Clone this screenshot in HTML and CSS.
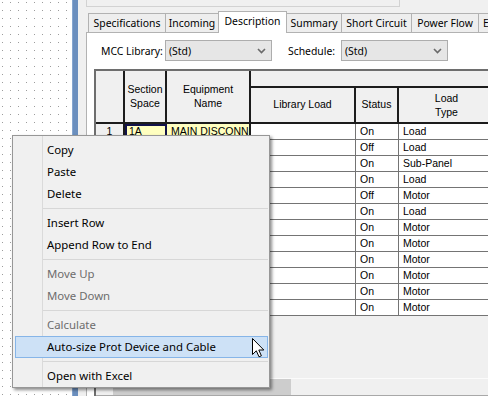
FILE: index.html
```html
<!DOCTYPE html>
<html lang="en">
<head>
  <title>MCC Description</title>
  <meta charset="UTF-8">
  <link rel="stylesheet" href="styles.css">
</head>
<body>
  <div class="screen">
    <div class="canvas"></div>
    <div class="dock-bar"></div>
    <div class="window">
      <div class="top-box"></div>
      <div class="tabs">
        <div class="tab tab-spec">Specifications</div>
        <div class="tab tab-incoming">Incoming</div>
        <div class="tab tab-desc is-active">Description</div>
        <div class="tab tab-summary">Summary</div>
        <div class="tab tab-sc">Short Circuit</div>
        <div class="tab tab-pf">Power Flow</div>
        <div class="tab tab-more">E</div>
      </div>
      <div class="tab-panel">
        <div class="filters">
          <span class="field-label label-lib">MCC Library:</span>
          <div class="combo">
            <span>(Std)</span>
            <svg class="chevron" width="9" height="6" viewBox="0 0 9 6"><path d="M1 1 L4.5 4.5 L8 1" fill="none" stroke="#6a6a6a" stroke-width="1.6"/></svg>
          </div>
          <span class="field-label label-sched">Schedule:</span>
          <div class="combo">
            <span>(Std)</span>
            <svg class="chevron" width="9" height="6" viewBox="0 0 9 6"><path d="M1 1 L4.5 4.5 L8 1" fill="none" stroke="#6a6a6a" stroke-width="1.6"/></svg>
          </div>
        </div>

        <div class="grid">
          <table class="sheet">
            <colgroup>
              <col class="c-num"><col class="c-sec"><col class="c-equip">
              <col class="c-lib"><col class="c-status"><col class="c-type">
            </colgroup>
            <thead>
              <tr class="group-row">
                <th rowspan="2"></th>
                <th rowspan="2">Section<br>Space</th>
                <th rowspan="2">Equipment<br>Name</th>
                <th colspan="3" class="group-cell"></th>
              </tr>
              <tr class="label-row">
                <th>Library Load</th>
                <th>Status</th>
                <th>Load<br>Type</th>
              </tr>
            </thead>
            <tbody>
              <tr><td class="num">1</td><td class="fixed hl is-selected">1A</td><td class="fixed hl">MAIN DISCONN</td><td></td><td>On</td><td>Load</td></tr>
              <tr><td class="num"></td><td class="fixed"></td><td class="fixed"></td><td></td><td>Off</td><td>Load</td></tr>
              <tr><td class="num"></td><td class="fixed"></td><td class="fixed"></td><td></td><td>On</td><td>Sub-Panel</td></tr>
              <tr><td class="num"></td><td class="fixed"></td><td class="fixed"></td><td></td><td>On</td><td>Load</td></tr>
              <tr><td class="num"></td><td class="fixed"></td><td class="fixed"></td><td></td><td>Off</td><td>Motor</td></tr>
              <tr><td class="num"></td><td class="fixed"></td><td class="fixed"></td><td></td><td>On</td><td>Load</td></tr>
              <tr><td class="num"></td><td class="fixed"></td><td class="fixed"></td><td></td><td>On</td><td>Motor</td></tr>
              <tr><td class="num"></td><td class="fixed"></td><td class="fixed"></td><td></td><td>On</td><td>Motor</td></tr>
              <tr><td class="num"></td><td class="fixed"></td><td class="fixed"></td><td></td><td>On</td><td>Motor</td></tr>
              <tr><td class="num"></td><td class="fixed"></td><td class="fixed"></td><td></td><td>On</td><td>Motor</td></tr>
              <tr><td class="num"></td><td class="fixed"></td><td class="fixed"></td><td></td><td>On</td><td>Motor</td></tr>
              <tr><td class="num"></td><td class="fixed"></td><td class="fixed"></td><td></td><td>On</td><td>Motor</td></tr>
            </tbody>
          </table>
          <div class="grid-empty"></div>
          <div class="hscroll"><div class="thumb"></div></div>
        </div>
      </div>
    </div>
  </div>

  <div class="context-menu">
    <div class="menu-item">Copy</div>
    <div class="menu-item">Paste</div>
    <div class="menu-item">Delete</div>
    <div class="menu-sep"></div>
    <div class="menu-item">Insert Row</div>
    <div class="menu-item">Append Row to End</div>
    <div class="menu-sep"></div>
    <div class="menu-item is-disabled">Move Up</div>
    <div class="menu-item is-disabled">Move Down</div>
    <div class="menu-sep"></div>
    <div class="menu-item is-disabled">Calculate</div>
    <div class="menu-item is-hot">Auto-size Prot Device and Cable</div>
    <div class="menu-sep"></div>
    <div class="menu-item">Open with Excel</div>
  </div>

  <svg class="cursor" width="13" height="20" viewBox="0 0 13 20">
    <path d="M0.5 0.5 L0.5 16.5 L4.3 12.8 L7 18.8 L9.4 17.8 L6.8 12 L11.8 12 Z" fill="#fff" stroke="#000" stroke-width="1" stroke-linejoin="miter"/>
  </svg>
</body>
</html>
```

FILE: styles.css
```css
* {
  box-sizing: border-box;
}
html, body {
  margin: 0;
  padding: 0;
}
body {
  width: 488px;
  height: 396px;
  overflow: hidden;
  position: relative;
  background: #f0f0f0;
  font-family: 'Noto Sans', 'Open Sans', sans-serif;
  font-size: 12px;
  color: #000;
}
.screen {
  display: flex;
  height: 396px;
}

/* drawing canvas on the left */
.canvas {
  width: 72px;
  flex: none;
  background-color: #fff;
  background-image:
    linear-gradient(to right, #fff 7px, transparent 7px),
    linear-gradient(to bottom, #fff 7px, #9c9c9c 7px);
  background-size: 8px 8px;
  background-position: 3px 3px;
}
.dock-bar {
  width: 6px;
  flex: none;
  background: #6b8fbe;
  border-left: 1px solid #86a6cf;
}
.window {
  flex: 1;
  display: flex;
  flex-direction: column;
  padding-left: 8px;
  min-width: 0;
}
.top-box {
  width: 314px;
  height: 7px;
  flex: none;
  border: 1px solid #d2d2d2;
  border-top: none;
  background: #f0f0f0;
}

/* tabs */
.tabs {
  display: flex;
  align-items: flex-end;
  height: 21px;
  margin-top: 4px;
  padding-left: 2px;
  flex: none;
  position: relative;
  z-index: 1;
  font-family: 'Noto Sans', sans-serif;
}
.tab {
  height: 19px;
  flex: none;
  border: 1px solid #b2b2b2;
  border-bottom: none;
  margin-right: -1px;
  background: #eeeeee;
  font-size: 10.4px;
  line-height: 18px;
  text-align: center;
  white-space: nowrap;
  overflow: hidden;
}
.tab.is-active {
  height: 22px;
  margin-bottom: -1px;
  background: #fff;
  line-height: 19px;
  position: relative;
  z-index: 2;
}
.tab-spec { width: 78px; }
.tab-incoming { width: 54px; }
.tab-desc { width: 69px; }
.tab-summary { width: 56px; }
.tab-sc { width: 71px; }
.tab-pf { width: 68px; }
.tab-more { width: 30px; text-align: left; padding-left: 4px; }

.tab-panel {
  flex: 1;
  background: #fff;
  border-top: 1px solid #b2b2b2;
  border-left: 1px solid #b2b2b2;
  display: flex;
  flex-direction: column;
  min-height: 0;
}
.filters {
  display: flex;
  align-items: center;
  height: 21px;
  margin-top: 7px;
  padding-left: 14px;
  flex: none;
  font-family: 'Noto Sans', sans-serif;
}
.field-label {
  font-size: 10.4px;
  white-space: nowrap;
}
.label-lib { width: 64px; }
.label-sched { width: 53px; margin-left: 16px; }
.combo {
  width: 107px;
  height: 21px;
  border: 1px solid #adadad;
  background: #e6e6e6;
  display: flex;
  align-items: center;
  justify-content: space-between;
  padding: 0 5px 0 3px;
  font-size: 10.4px;
}
.chevron {
  display: block;
}

/* data grid */
.grid {
  margin: 8px 0 0 7px;
  flex: 1;
  width: 400px;
  border-top: 2px solid #6e6e6e;
  border-left: 2px solid #6e6e6e;
  background: #f0f0f0;
  display: flex;
  flex-direction: column;
  min-height: 0;
}
.sheet {
  table-layout: fixed;
  width: 398px;
  border-collapse: separate;
  border-spacing: 0;
  font-family: 'Liberation Sans', Arial, sans-serif;
  font-size: 10.5px;
  flex: none;
}
.c-num { width: 29px; }
.c-sec { width: 42px; }
.c-equip { width: 84px; }
.c-lib { width: 105px; }
.c-status { width: 43px; }
.c-type { width: 95px; }

.sheet th {
  background: #f0f0f0;
  font-weight: normal;
  border-right: 2px solid #1c1c1c;
  border-bottom: 2px solid #1c1c1c;
  padding: 0;
  line-height: 13.5px;
  text-align: center;
  white-space: nowrap;
  overflow: hidden;
}
.group-row { height: 17px; }
.label-row { height: 36px; }
.sheet th.group-cell {
  border-right: none;
}
.label-row th:last-child {
  border-right: none;
  line-height: 14px;
}

.sheet tbody tr { height: 16px; }
.sheet td {
  background: #fff;
  border-right: 1px solid #747474;
  border-bottom: 1px solid #747474;
  padding: 0 4px;
  height: 16px;
  line-height: 15px;
  white-space: nowrap;
  overflow: hidden;
}
.sheet td.num {
  background: #f0f0f0;
  text-align: center;
  border-right: 2px solid #1c1c1c;
}
.sheet td.fixed {
  border-right: 2px solid #1c1c1c;
}
.sheet td.hl {
  background: #ffffc0;
}
.sheet td.is-selected {
  outline: 2px solid #12124a;
  outline-offset: -2px;
}

.grid-empty {
  flex: 1;
}
.hscroll {
  height: 18px;
  flex: none;
  border-top: 1px solid #fbfbfb;
  border-bottom: 1px solid #a8a8a8;
  background: #f0f0f0;
  padding-left: 17px;
}
.thumb {
  width: 178px;
  height: 16px;
  background: #cdcdcd;
}

/* context menu */
.context-menu {
  position: absolute;
  left: 12px;
  top: 135px;
  width: 258px;
  height: 253px;
  border: 1px solid #979797;
  padding-top: 3px;
  background-color: #f0f0f0;
  background-image: linear-gradient(to right, transparent 29px, #dadada 29px, #dadada 30px, transparent 30px);
  box-shadow: 2px 2px 3px rgba(0, 0, 0, 0.45);
  z-index: 10;
}
.menu-item {
  height: 22px;
  margin: 0 1px 0 2px;
  border: 1px solid transparent;
  padding-left: 31px;
  line-height: 19px;
  font-size: 11.4px;
  white-space: nowrap;
}
.menu-item.is-disabled {
  color: #6d6d6d;
}
.menu-item.is-hot {
  background: #cde1f6;
  border-color: #86b5e8;
}
.menu-sep {
  height: 7px;
  margin-left: 30px;
  margin-right: 1px;
  background: linear-gradient(to bottom, transparent 3px, #d7d7d7 3px, #d7d7d7 4px, transparent 4px);
}

.cursor {
  position: absolute;
  left: 252px;
  top: 338px;
  z-index: 20;
}
```
